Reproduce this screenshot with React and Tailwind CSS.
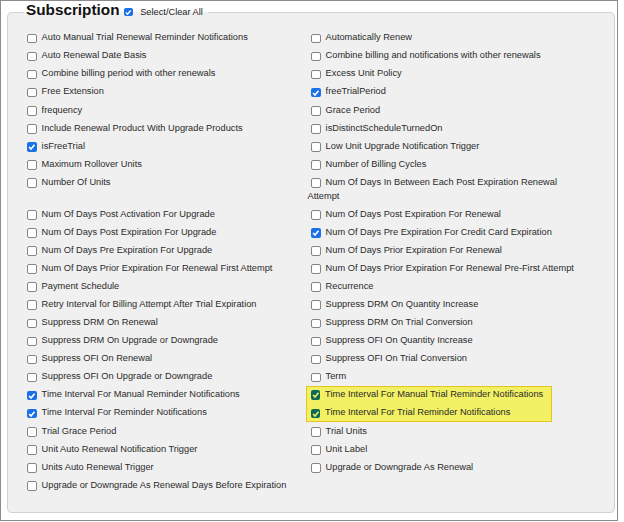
import React from 'react';

const rows = [
  [{ t: 'Auto Manual Trial Renewal Reminder Notifications' }, { t: 'Automatically Renew' }],
  [{ t: 'Auto Renewal Date Basis' }, { t: 'Combine billing and notifications with other renewals' }],
  [{ t: 'Combine billing period with other renewals' }, { t: 'Excess Unit Policy' }],
  [{ t: 'Free Extension' }, { t: 'freeTrialPeriod', c: true }],
  [{ t: 'frequency' }, { t: 'Grace Period' }],
  [{ t: 'Include Renewal Product With Upgrade Products' }, { t: 'isDistinctScheduleTurnedOn' }],
  [{ t: 'isFreeTrial', c: true }, { t: 'Low Unit Upgrade Notification Trigger' }],
  [{ t: 'Maximum Rollover Units' }, { t: 'Number of Billing Cycles' }],
  [{ t: 'Number Of Units' }, { t: 'Num Of Days In Between Each Post Expiration Renewal Attempt' }],
  [{ t: 'Num Of Days Post Activation For Upgrade' }, { t: 'Num Of Days Post Expiration For Renewal' }],
  [{ t: 'Num Of Days Post Expiration For Upgrade' }, { t: 'Num Of Days Pre Expiration For Credit Card Expiration', c: true }],
  [{ t: 'Num Of Days Pre Expiration For Upgrade' }, { t: 'Num Of Days Prior Expiration For Renewal' }],
  [{ t: 'Num Of Days Prior Expiration For Renewal First Attempt' }, { t: 'Num Of Days Prior Expiration For Renewal Pre-First Attempt' }],
  [{ t: 'Payment Schedule' }, { t: 'Recurrence' }],
  [{ t: 'Retry Interval for Billing Attempt After Trial Expiration' }, { t: 'Suppress DRM On Quantity Increase' }],
  [{ t: 'Suppress DRM On Renewal' }, { t: 'Suppress DRM On Trial Conversion' }],
  [{ t: 'Suppress DRM On Upgrade or Downgrade' }, { t: 'Suppress OFI On Quantity Increase' }],
  [{ t: 'Suppress OFI On Renewal' }, { t: 'Suppress OFI On Trial Conversion' }],
  [{ t: 'Suppress OFI On Upgrade or Downgrade' }, { t: 'Term' }],
  [{ t: 'Time Interval For Manual Reminder Notifications', c: true }, { t: 'Time Interval For Manual Trial Reminder Notifications', c: true, hl: 'top' }],
  [{ t: 'Time Interval For Reminder Notifications', c: true }, { t: 'Time Interval For Trial Reminder Notifications', c: true, hl: 'bottom' }],
  [{ t: 'Trial Grace Period' }, { t: 'Trial Units' }],
  [{ t: 'Unit Auto Renewal Notification Trigger' }, { t: 'Unit Label' }],
  [{ t: 'Units Auto Renewal Trigger' }, { t: 'Upgrade or Downgrade As Renewal' }],
  [{ t: 'Upgrade or Downgrade As Renewal Days Before Expiration' }, null],
];

function Box({ checked, hl, small }) {
  const size = small ? 'w-[8.5px] h-[8.5px]' : 'w-[9.5px] h-[9.5px]';
  if (!checked) {
    return (
      <span className={`inline-block ${size} rounded-[2px] border border-[#858585] bg-white align-[-3px] ml-[3.8px] mr-[4.8px]`} />
    );
  }
  return (
    <span
      className={`inline-flex items-center justify-center ${size} rounded-[2px] align-[-3px] ${
        hl ? 'bg-[#0f6a55]' : 'bg-[#1a70e6]'
      } ${small ? '' : 'ml-[3.8px] mr-[4.8px]'}`}
    >
      <svg viewBox="0 0 10 10" className="w-full h-full">
        <path d="M2.2 5.3 L4.2 7.3 L7.9 2.8" fill="none" stroke={hl ? '#e9ef6a' : '#ffffff'} strokeWidth="1.7" />
      </svg>
    </span>
  );
}

function Item({ item }) {
  if (!item) return <div />;
  let cls = 'py-[2.2px]';
  if (item.hl === 'top') {
    cls = 'w-[246px] -ml-[1.5px] bg-[#f2f064] border-[1.5px] border-b-0 border-[#e6c41c] pt-[0.7px] pb-[2.2px]';
  } else if (item.hl === 'bottom') {
    cls = 'w-[246px] -ml-[1.5px] bg-[#f2f064] border-[1.5px] border-t-0 border-[#e6c41c] pt-[2.2px] pb-[0.7px]';
  }
  return (
    <label className={`block ${cls}`}>
      <Box checked={item.c} hl={item.hl} />
      {item.t}
    </label>
  );
}

export default function App() {
  return (
    <div className="w-[624px] h-[522px] bg-white font-['Liberation_Sans',Arial,sans-serif]">
      <div className="w-[618px] h-[521px] border border-[#8c8c8c]">
        <fieldset className="ml-[6px] w-[608px] border border-[#d2d2d2] rounded-[5px] bg-[#f0f0f0] pl-[15.5px] pr-[15.5px] pt-[6px] pb-[17px]">
          <legend className="pl-[2.5px] pr-[5px] pb-[4px]">
            <div className="flex items-center h-[18px]">
              <span className="font-bold text-[15.3px] leading-[18px] text-[#111]">Subscription</span>
              <span className="ml-[4.7px] mt-[4px] flex">
                <Box checked small />
              </span>
              <span className="ml-[7.5px] mt-[5px] text-[9.25px] leading-[13.7px] text-[#222]">Select/Clear All</span>
            </div>
          </legend>
          <div className="grid grid-cols-[284px_276px] text-[9.25px] leading-[13.7px] text-[#2a2a2a]">
            {rows.map((r, i) => (
              <React.Fragment key={i}>
                <Item item={r[0]} />
                <Item item={r[1]} />
              </React.Fragment>
            ))}
          </div>
        </fieldset>
      </div>
    </div>
  );
}
